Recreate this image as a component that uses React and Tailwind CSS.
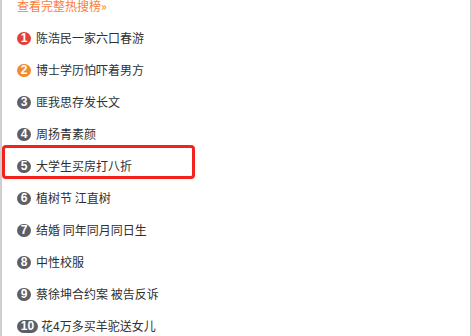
import React from "react";

const items = [
  "陈浩民一家六口春游",
  "博士学历怕吓着男方",
  "匪我思存发长文",
  "周扬青素颜",
  "大学生买房打八折",
  "植树节 江直树",
  "结婚 同年同月同日生",
  "中性校服",
  "蔡徐坤合约案 被告反诉",
  "花4万多买羊驼送女儿",
];

function Badge({ n }) {
  const bg = n === 1 ? "bg-[#e3403b]" : n === 2 ? "bg-[#f28a2e]" : "bg-[#5c5f67]";
  const w = n >= 10 ? "w-[21px]" : "w-[14px]";
  return (
    <span
      className={`${bg} ${w} h-[13px] rounded-full flex items-center justify-center text-white font-bold text-[12px] leading-none shrink-0`}
      style={{ fontFamily: '"Liberation Sans", Arial, sans-serif' }}
    >
      {n}
    </span>
  );
}

export default function App() {
  return (
    <div
      className="w-[471px] h-[336px] overflow-hidden bg-white border-l-2 border-r border-[#cfcfcf]"
      style={{ fontFamily: '"Noto Sans CJK SC", "Microsoft YaHei", sans-serif' }}
    >
      <div className="-mt-[11px] pl-[15px]">
        <div className="h-[33px] leading-[33px] text-[12px] text-[#fa7d3c]">查看完整热搜榜»</div>
        {items.map((t, i) => (
          <div key={i} className="relative h-[32px] flex items-center text-[12px] text-[#2f2f2f]">
            <Badge n={i + 1} />
            <span className={i === 9 ? "ml-[3px]" : "ml-[5px]"}>{t}</span>
            {i === 4 && (
              <div className="absolute -left-[15px] -top-[5px] w-[193px] h-[34px] border-[3px] border-[#f5211c] rounded-[4px]" />
            )}
          </div>
        ))}
      </div>
    </div>
  );
}
